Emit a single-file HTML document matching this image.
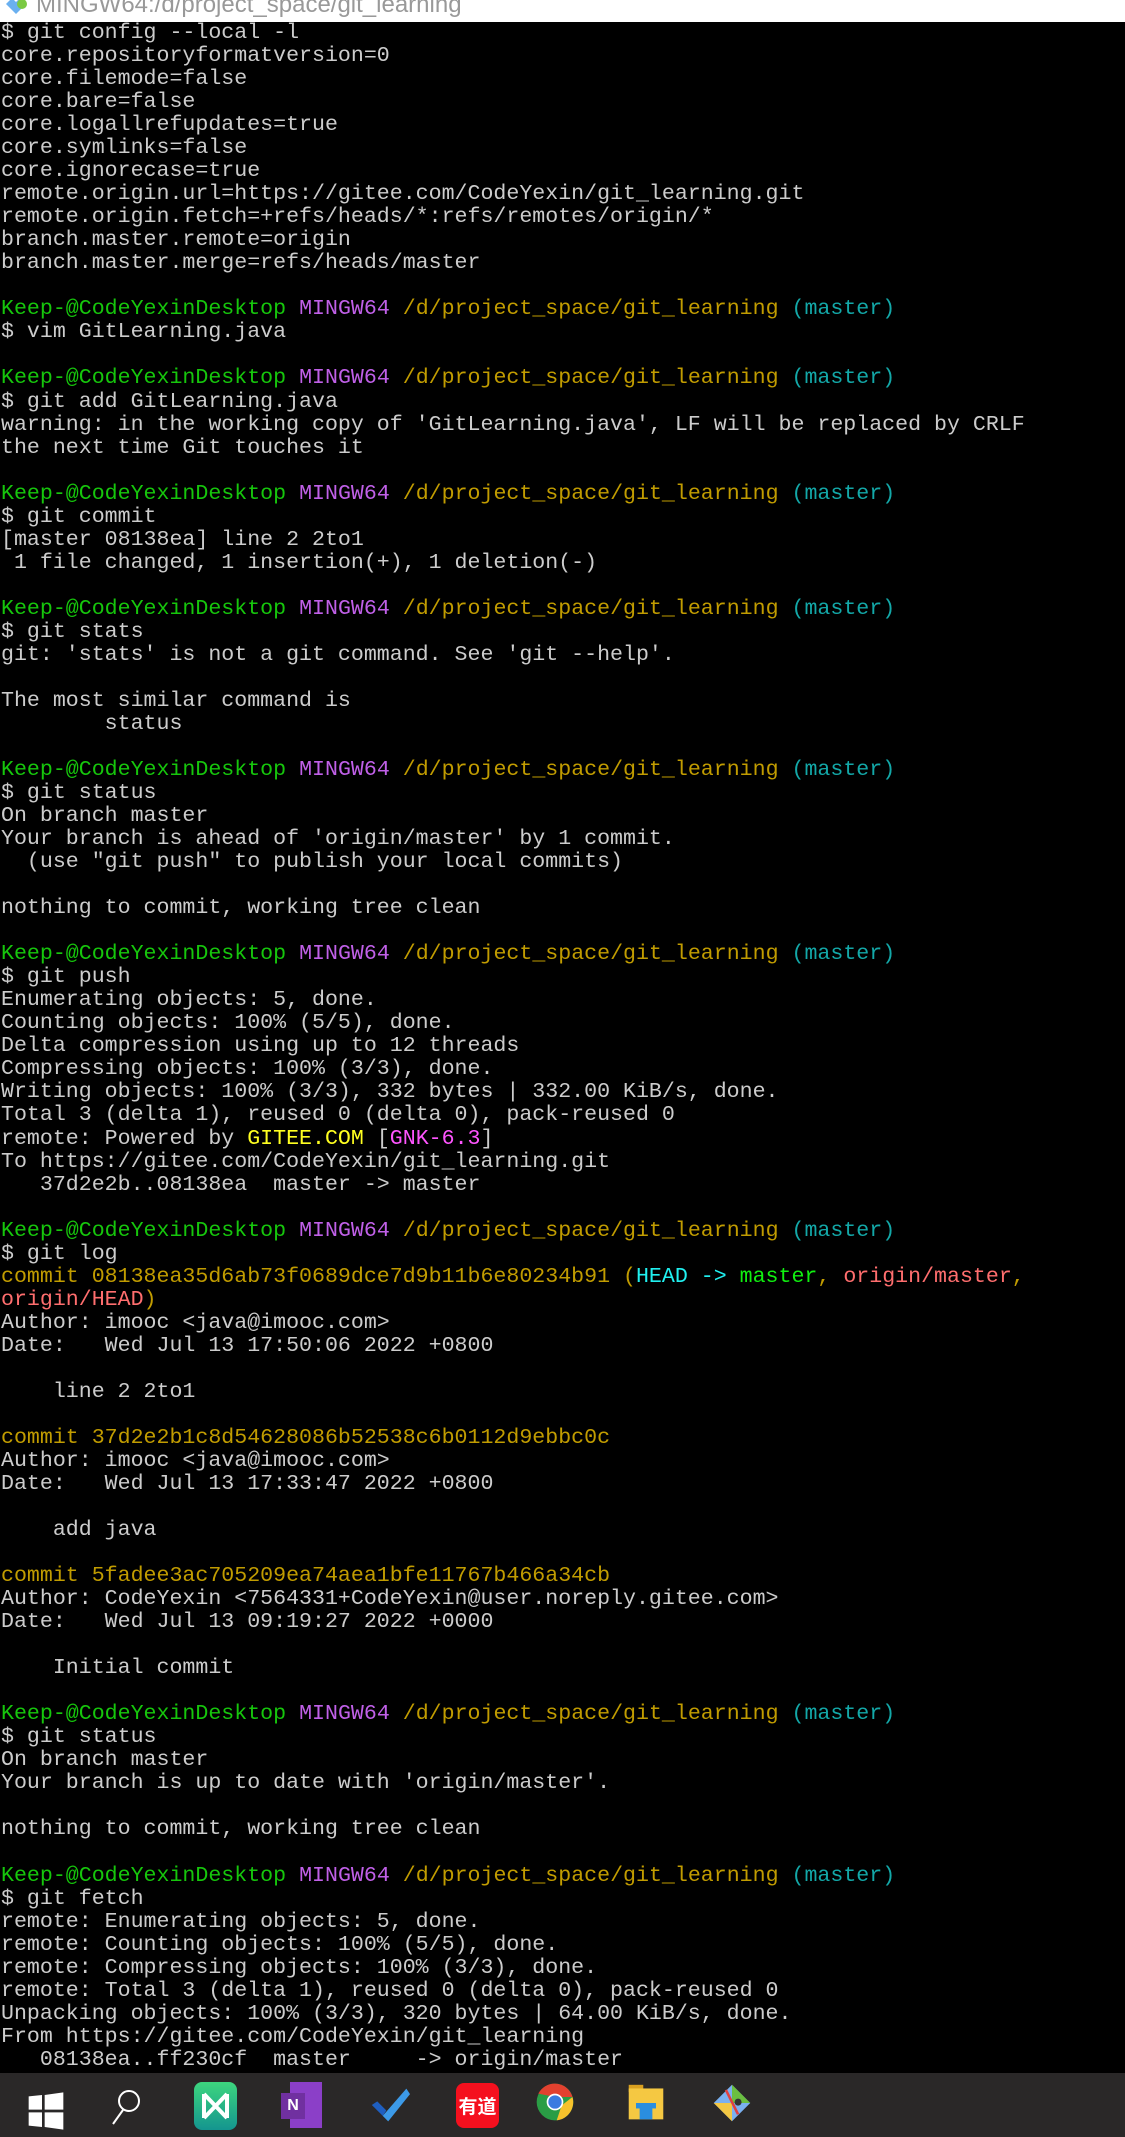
<!DOCTYPE html>
<html><head><meta charset="utf-8"><style>
html,body{margin:0;padding:0;width:1125px;height:2137px;overflow:hidden;background:#000}
.title{position:absolute;left:0;top:0;width:1125px;height:22px;background:#fff;overflow:hidden}
.title span{position:absolute;left:36px;top:-9px;font:24px "Liberation Sans",sans-serif;color:#999}
.term{position:absolute;left:0;top:22px;width:1125px;height:2051px;background:#000;overflow:hidden}
pre{margin:0;padding:0;position:absolute;left:1px;top:0px;font-family:"Liberation Mono",monospace;font-size:21.6px;line-height:23.03px;color:#cccccc;white-space:pre}
.g{color:#16c60c}.m{color:#c060e8}.y{color:#c19c00}.c{color:#13a8a8}
.bc{color:#20f0f0}.bg{color:#10f010}.br{color:#ff6e6e}.by{color:#ffff20}.bm{color:#ff55ff}
.task{position:absolute;left:0;top:2073px;width:1125px;height:64px;background:#2a2828}
.ic{position:absolute;top:12px;width:40px;height:40px}
</style></head><body>
<div class="title"><svg style="position:absolute;left:2px;top:0" width="30" height="20"><path d="M4 4 L14 14 L24 4 L18 -2 L14 2 L10 -2Z" fill="#6ab0f0"/><circle cx="20" cy="4" r="5" fill="#7ac943"/></svg><span>MINGW64:/d/project_space/git_learning</span></div>
<div class="term"><pre>$ git config --local -l
core.repositoryformatversion=0
core.filemode=false
core.bare=false
core.logallrefupdates=true
core.symlinks=false
core.ignorecase=true
remote.origin.url=https://gitee.com/CodeYexin/git_learning.git
remote.origin.fetch=+refs/heads/*:refs/remotes/origin/*
branch.master.remote=origin
branch.master.merge=refs/heads/master

<span class="g">Keep-@CodeYexinDesktop</span> <span class="m">MINGW64</span> <span class="y">/d/project_space/git_learning</span> <span class="c">(master)</span>
$ vim GitLearning.java

<span class="g">Keep-@CodeYexinDesktop</span> <span class="m">MINGW64</span> <span class="y">/d/project_space/git_learning</span> <span class="c">(master)</span>
$ git add GitLearning.java
warning: in the working copy of 'GitLearning.java', LF will be replaced by CRLF
the next time Git touches it

<span class="g">Keep-@CodeYexinDesktop</span> <span class="m">MINGW64</span> <span class="y">/d/project_space/git_learning</span> <span class="c">(master)</span>
$ git commit
[master 08138ea] line 2 2to1
 1 file changed, 1 insertion(+), 1 deletion(-)

<span class="g">Keep-@CodeYexinDesktop</span> <span class="m">MINGW64</span> <span class="y">/d/project_space/git_learning</span> <span class="c">(master)</span>
$ git stats
git: 'stats' is not a git command. See 'git --help'.

The most similar command is
        status

<span class="g">Keep-@CodeYexinDesktop</span> <span class="m">MINGW64</span> <span class="y">/d/project_space/git_learning</span> <span class="c">(master)</span>
$ git status
On branch master
Your branch is ahead of 'origin/master' by 1 commit.
  (use "git push" to publish your local commits)

nothing to commit, working tree clean

<span class="g">Keep-@CodeYexinDesktop</span> <span class="m">MINGW64</span> <span class="y">/d/project_space/git_learning</span> <span class="c">(master)</span>
$ git push
Enumerating objects: 5, done.
Counting objects: 100% (5/5), done.
Delta compression using up to 12 threads
Compressing objects: 100% (3/3), done.
Writing objects: 100% (3/3), 332 bytes | 332.00 KiB/s, done.
Total 3 (delta 1), reused 0 (delta 0), pack-reused 0
remote: Powered by <span class="by">GITEE.COM</span> [<span class="bm">GNK-6.3</span>]
To https://gitee.com/CodeYexin/git_learning.git
   37d2e2b..08138ea  master -&gt; master

<span class="g">Keep-@CodeYexinDesktop</span> <span class="m">MINGW64</span> <span class="y">/d/project_space/git_learning</span> <span class="c">(master)</span>
$ git log
<span class="y">commit 08138ea35d6ab73f0689dce7d9b11b6e80234b91 (</span><span class="bc">HEAD -&gt; </span><span class="bg">master</span><span class="y">, </span><span class="br">origin/master</span><span class="y">,</span>
<span class="br">origin/HEAD</span><span class="y">)</span>
Author: imooc &lt;java@imooc.com&gt;
Date:   Wed Jul 13 17:50:06 2022 +0800

    line 2 2to1

<span class="y">commit 37d2e2b1c8d54628086b52538c6b0112d9ebbc0c</span>
Author: imooc &lt;java@imooc.com&gt;
Date:   Wed Jul 13 17:33:47 2022 +0800

    add java

<span class="y">commit 5fadee3ac705209ea74aea1bfe11767b466a34cb</span>
Author: CodeYexin &lt;7564331+CodeYexin@user.noreply.gitee.com&gt;
Date:   Wed Jul 13 09:19:27 2022 +0000

    Initial commit

<span class="g">Keep-@CodeYexinDesktop</span> <span class="m">MINGW64</span> <span class="y">/d/project_space/git_learning</span> <span class="c">(master)</span>
$ git status
On branch master
Your branch is up to date with 'origin/master'.

nothing to commit, working tree clean

<span class="g">Keep-@CodeYexinDesktop</span> <span class="m">MINGW64</span> <span class="y">/d/project_space/git_learning</span> <span class="c">(master)</span>
$ git fetch
remote: Enumerating objects: 5, done.
remote: Counting objects: 100% (5/5), done.
remote: Compressing objects: 100% (3/3), done.
remote: Total 3 (delta 1), reused 0 (delta 0), pack-reused 0
Unpacking objects: 100% (3/3), 320 bytes | 64.00 KiB/s, done.
From https://gitee.com/CodeYexin/git_learning
   08138ea..ff230cf  master     -&gt; origin/master</pre></div>
<div class="task">
<svg class="ic" style="left:26px;top:18px" width="30" height="30" viewBox="0 0 30 30"><path d="M2 4 L12 3 V14 H2Z M14 3 L28 1 V14 H14Z M2 16 H12 V27 L2 26Z M14 16 H28 V29 L14 27Z" fill="#fff"/></svg>
<svg class="ic" style="left:105px;top:14px" width="40" height="40" viewBox="0 0 40 40"><circle cx="24" cy="14" r="10" fill="none" stroke="#fff" stroke-width="2"/><path d="M18 23 L8 37" stroke="#fff" stroke-width="2"/></svg>
<div class="ic" style="left:194px;top:9px;width:43px;height:48px;border-radius:8px;background:linear-gradient(#3dd67e,#14958f)"><svg width="43" height="48" viewBox="0 0 43 48"><path d="M10 12 V36 M33 12 V36 M10 12 L33 36 M33 12 L10 36" stroke="#fff" stroke-width="4" fill="none"/></svg></div>
<div class="ic" style="left:290px;top:9px;width:32px;height:46px;background:#8b3fc8"><div style="position:absolute;left:-9px;top:11px;width:24px;height:26px;background:#7030a0;color:#fff;font:bold 16px 'Liberation Sans',sans-serif;text-align:center;line-height:26px">N</div></div>
<svg class="ic" style="left:370px;top:12px" width="44" height="44" viewBox="0 0 44 44"><path d="M2 22 L14 34 L18 28 L8 18Z" fill="#1f5fc0"/><path d="M14 34 L40 4 L44 10 L20 40Z" fill="#3c9ae8"/></svg>
<div class="ic" style="left:456px;top:10px;width:43px;height:45px;border-radius:8px;background:#f5101e;color:#fff;font:bold 19px 'Noto Sans CJK SC',sans-serif;text-align:center;line-height:45px">有道</div>
<svg class="ic" style="left:535px;top:9px" width="48" height="48" viewBox="0 0 48 48"><circle cx="24" cy="24" r="22" fill="#2a9d45"/><path d="M24 2 A22 22 0 0 1 45 18 L24 18Z" fill="#e2412f"/><path d="M4 14 A22 22 0 0 1 24 2 L24 18Z" fill="#e2412f"/><path d="M45 18 A22 22 0 0 1 26 46 L32 28Z" fill="#f6c22c"/><circle cx="24" cy="24" r="10" fill="#fff"/><circle cx="24" cy="24" r="8" fill="#3b7be0"/></svg>
<svg class="ic" style="left:626px;top:10px" width="42" height="44" viewBox="0 0 42 44"><rect x="2" y="2" width="16" height="8" fill="#d9a020"/><rect x="2" y="6" width="38" height="34" fill="#f5c842"/><rect x="14" y="26" width="14" height="14" fill="#2a8ee0"/><rect x="10" y="22" width="22" height="6" fill="#2a8ee0"/></svg>
<svg class="ic" style="left:712px;top:10px" width="46" height="46" viewBox="0 0 46 46"><path d="M23 2 L44 23 L23 44 L2 23Z" fill="#7ab0f0"/><path d="M23 2 L44 23 L23 23Z" fill="#6bbf40"/><path d="M2 23 L23 44 L23 23Z" fill="#f3c744"/><path d="M16 8 L30 36" stroke="#e04040" stroke-width="3"/><circle cx="30" cy="22" r="4" fill="#333"/></svg>
</div>
</body></html>
